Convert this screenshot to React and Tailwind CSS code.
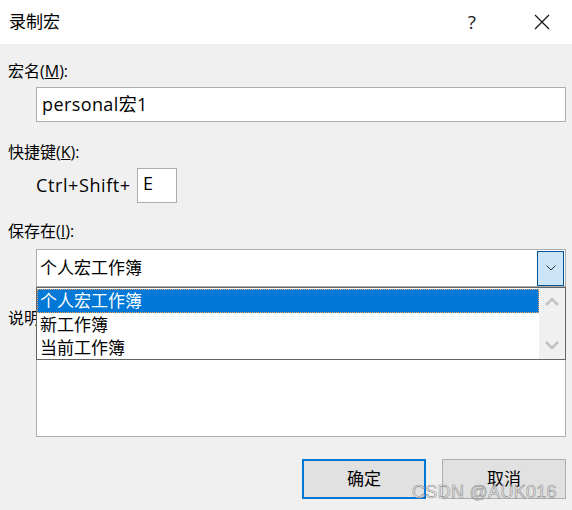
export default function App() {
    const font = "font-['Open_Sans','Noto_Sans_CJK_SC',sans-serif]";
    return (
        <div
            className={`relative w-[572px] h-[510px] overflow-hidden bg-[#f0f0f0] text-black ${font}`}
        >
            {/* title bar */}
            <div className="flex h-[44px] items-center bg-white pl-[9px]">
                <span className="text-[17px]">录制宏</span>
                <span className="ml-auto text-[19px] text-[#222]">?</span>
                <svg
                    className="ml-[58px] mr-[22px]"
                    width="16"
                    height="16"
                    viewBox="0 0 16 16"
                >
                    <path d="M1 1L15 15M15 1L1 15" stroke="#111" strokeWidth="1.2" />
                </svg>
            </div>

            <div className="flex flex-col pl-[8px] pr-[6px] text-[16px]">
                <div className="mt-[16px] h-[22px] leading-[22px]">
                    宏名(<span className="underline">M</span>):
                </div>
                <div className="ml-[28px] mt-[5px] flex h-[35px] items-center border border-[#adadad] bg-white pl-[5px] text-[18px] tracking-[0.4px]">
                    personal宏1
                </div>

                <div className="mt-[19px] h-[22px] leading-[22px]">
                    快捷键(<span className="underline">K</span>):
                </div>
                <div className="ml-[28px] mt-[5px] flex items-center">
                    <span className="w-[101px] text-[18px] tracking-[0.6px]">Ctrl+Shift+</span>
                    <div className="h-[35px] w-[40px] border border-[#adadad] bg-white pl-[5px] text-[18px] leading-[28px]">
                        E
                    </div>
                </div>

                <div className="mt-[17px] h-[22px] leading-[22px]">
                    保存在(<span className="underline">I</span>):
                </div>
                <div className="ml-[28px] mt-[7px] flex h-[38px] items-center border border-[#adadad] bg-white pl-[3px] pr-[1px] text-[17px]">
                    <span>个人宏工作簿</span>
                    <div className="ml-auto flex h-[35px] w-[27px] items-center justify-center border border-[#005499] bg-[#cce4f7]">
                        <svg width="10" height="6" viewBox="0 0 10 6">
                            <path d="M0.5 0.5L5 5L9.5 0.5" stroke="#333" strokeWidth="1" fill="none" />
                        </svg>
                    </div>
                </div>

                <div className="mt-[20px] h-[22px] leading-[22px]">
                    说明(<span className="underline">D</span>):
                </div>
                <div className="ml-[28px] mt-[4px] h-[104px] border border-[#adadad] bg-white"></div>

                <div className="mt-[22px] flex justify-end gap-[16px]">
                    <button className="h-[40px] w-[124px] border-2 border-[#0078d7] bg-[#e1e1e1] text-[17px]">
                        确定
                    </button>
                    <button className="h-[40px] w-[124px] border border-[#adadad] bg-[#e1e1e1] text-[17px]">
                        取消
                    </button>
                </div>
            </div>

            {/* open combo list */}
            <div className="absolute left-[36px] top-[287px] flex h-[73px] w-[530px] border border-[#646464] bg-white text-[17px]">
                <div className="flex flex-1 flex-col pt-[1px]">
                    <div className="h-[24px] border border-dotted border-[#f7a35c] bg-[#0078d7] pl-[2px] leading-[22px] text-white">
                        个人宏工作簿
                    </div>
                    <div className="h-[24px] pl-[3px] leading-[24px]">新工作簿</div>
                    <div className="h-[24px] pl-[3px] leading-[22px]">当前工作簿</div>
                </div>
                <div className="flex w-[26px] flex-col items-center justify-between bg-[#f0f0f0] py-[9px]">
                    <svg width="14" height="9" viewBox="0 0 14 9">
                        <path d="M1 8L7 2L13 8" stroke="#c3c3c3" strokeWidth="2.5" fill="none" />
                    </svg>
                    <svg width="14" height="9" viewBox="0 0 14 9">
                        <path d="M1 1L7 7L13 1" stroke="#c3c3c3" strokeWidth="2.5" fill="none" />
                    </svg>
                </div>
            </div>

            {/* watermark */}
            <div className="absolute left-[412px] top-[482px] text-[18px] font-['Liberation_Sans',sans-serif] text-white/60 [-webkit-text-stroke:0.6px_#8a8a8a] leading-[20px] tracking-[0.3px]">
                CSDN @AUK016
            </div>
        </div>
    );
}
